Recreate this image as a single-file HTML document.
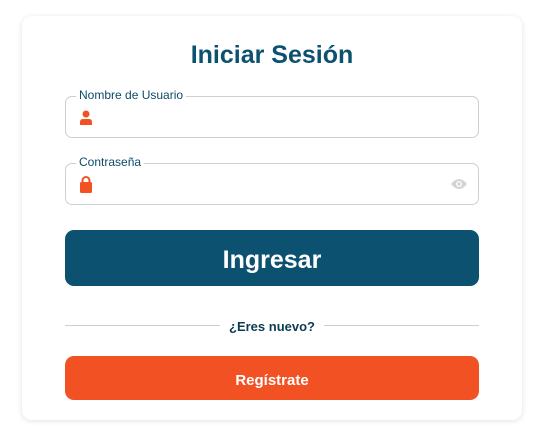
<!DOCTYPE html>
<html><head><style>
body{margin:0;width:554px;height:446px;background:#fff;font-family:"Liberation Sans",sans-serif;position:relative;overflow:hidden}
.card{position:absolute;left:22px;top:16px;width:500px;height:404px;background:#fff;border-radius:10px;box-shadow:0 1px 6px rgba(0,0,0,.12)}
.t{position:absolute;left:0;width:100%;top:25px;text-align:center;font-size:25px;font-weight:bold;color:#0c5270}
.in{position:absolute;left:43px;width:412px;height:40px;border:1px solid #cfcfcf;border-radius:7px}
.lb{position:absolute;left:10px;top:-9px;background:#fff;padding:0 3px;font-size:12px;color:#0c4a66}
.btn{position:absolute;left:43px;width:414px;border-radius:9px;color:#fff;font-weight:bold;text-align:center}
.line{position:absolute;top:309px;height:1px;background:#cfcfcf}
</style></head><body>
<div class="card">
<div class="t">Iniciar Sesión</div>
<div class="in" style="top:80px"><span class="lb">Nombre de Usuario</span>
<svg style="position:absolute;left:13px;top:13px" width="14" height="15" viewBox="0 0 14 15"><circle cx="7" cy="4" r="3.5" fill="#f25124"/><path d="M1 15V12Q1 9 4 9H10Q13 9 13 12V15Z" fill="#f25124"/></svg></div>
<div class="in" style="top:147px"><span class="lb">Contraseña</span>
<svg style="position:absolute;left:13px;top:11px" width="14" height="18" viewBox="0 0 14 18"><path d="M3.5 8V5.5a3.5 3.5 0 0 1 7 0V8" stroke="#f25124" stroke-width="2" fill="none"/><rect x="1" y="7" width="12" height="11" rx="1.5" fill="#f25124"/></svg>
<svg style="position:absolute;left:384px;top:14px" width="18" height="12" viewBox="0 0 18 12"><path d="M1 6Q9 -4 17 6Q9 16 1 6Z" fill="#d4d4d4"/><circle cx="9" cy="6" r="3" fill="#fff"/><circle cx="9" cy="6" r="1.7" fill="#d4d4d4"/></svg></div>
<div class="btn" style="top:214px;height:56px;line-height:60px;background:#0c5270;font-size:25px">Ingresar</div>
<div class="line" style="left:43px;width:155px"></div>
<div class="line" style="left:302px;width:155px"></div>
<div style="position:absolute;top:303px;left:0;width:100%;text-align:center;font-size:13px;font-weight:bold;color:#0c3c55">¿Eres nuevo?</div>
<div class="btn" style="top:340px;height:44px;line-height:49px;background:#f25124;font-size:15px">Regístrate</div>
</div>
</body></html>
